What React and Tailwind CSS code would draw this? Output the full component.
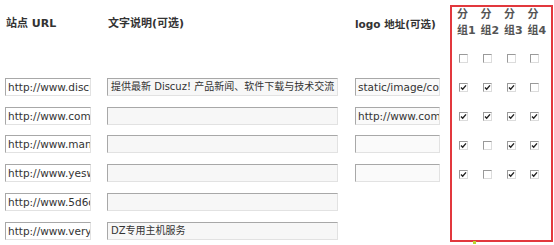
const rows = [
  { url: "http://www.discuz.net", desc: "提供最新 Discuz! 产品新闻、软件下载与技术交流", logo: "static/image/common/logo.png", groups: [1, 1, 1, 0] },
  { url: "http://www.comsenz.com", desc: "", logo: "http://www.comsenz.com", groups: [1, 1, 1, 1] },
  { url: "http://www.manyou.com", desc: "", logo: "", groups: [1, 0, 1, 1] },
  { url: "http://www.yeswan.com", desc: "", logo: "", groups: [1, 0, 1, 1] },
  { url: "http://www.5d6d.com", desc: "", logo: null, groups: null },
  { url: "http://www.verycloud.cn", desc: "DZ专用主机服务", logo: null, groups: null },
];

const font = { fontFamily: '"DejaVu Sans", "Noto Sans CJK SC", sans-serif' };

function Field({ value, className }) {
  return (
    <div
      className={`h-[18px] border border-t-[#a8a8a8] border-l-[#a8a8a8] border-b-[#e2e2e2] border-r-[#e2e2e2] pl-[2px] leading-[16px] text-[#333] whitespace-nowrap overflow-hidden ${className}`}
    >
      {value}
    </div>
  );
}

function Check({ on }) {
  return (
    <div className="w-[9px] h-[9px] border border-t-[#9a9a9a] border-l-[#9a9a9a] border-b-[#dcdcdc] border-r-[#dcdcdc] bg-white flex items-center justify-center">
      {on ? (
        <svg width="7" height="7" viewBox="0 0 7 7">
          <path d="M1 3.4 L2.7 5.2 L6 1.4" fill="none" stroke="#222" strokeWidth="1.4" />
        </svg>
      ) : null}
    </div>
  );
}

export default function App() {
  return (
    <div className="relative w-[554px] h-[245px] bg-white flex overflow-hidden" style={font}>
      <div className="w-[450px] flex flex-col">
        <div className="h-[44px] flex pl-[6px] pt-[17px] text-[11px] leading-[14px] font-bold text-[#333]">
          <span className="w-[102px]">站点 URL</span>
          <span className="w-[247px]">文字说明(可选)</span>
          <span className="text-[10.5px]">logo 地址(可选)</span>
        </div>
        <div className="h-[29px]" />
        {rows.map((r, i) => (
          <div key={i} className="h-[29px] flex items-center pl-[5px]">
            <Field value={r.url} className="w-[86px] bg-white text-[10.5px]" />
            <Field value={r.desc} className="w-[231px] ml-[16px] bg-[#f7f7f7] pl-[3px] text-[10px]" />
            {r.logo !== null && <Field value={r.logo} className="w-[85px] ml-[17px] bg-[#fafafa] text-[10.5px]" />}
          </div>
        ))}
      </div>

      <div className="mt-[5px] w-[103px] h-[237px] border-2 border-[#e2383d] flex flex-col">
        <div className="flex pl-[5px] text-[11px] leading-[16px] font-bold text-[#555]">
          {[1, 2, 3, 4].map((n) => (
            <div key={n} className="w-[26px]">
              <div>分</div>
              <div>组{n}</div>
            </div>
          ))}
        </div>
        <div className="pt-[5px]">
          {[[0, 0, 0, 0], ...rows.filter((r) => r.groups).map((r) => r.groups)].map((g, i) => (
            <div key={i} className="h-[29px] flex items-center pl-[4px]">
              {g.map((on, j) => (
                <div key={j} className="w-[26px] pl-[3px]">
                  <Check on={on} />
                </div>
              ))}
            </div>
          ))}
        </div>
      </div>

      <div className="absolute left-[473px] top-[241px] w-[3px] h-[3px] bg-[#b9d530]" />
    </div>
  );
}
